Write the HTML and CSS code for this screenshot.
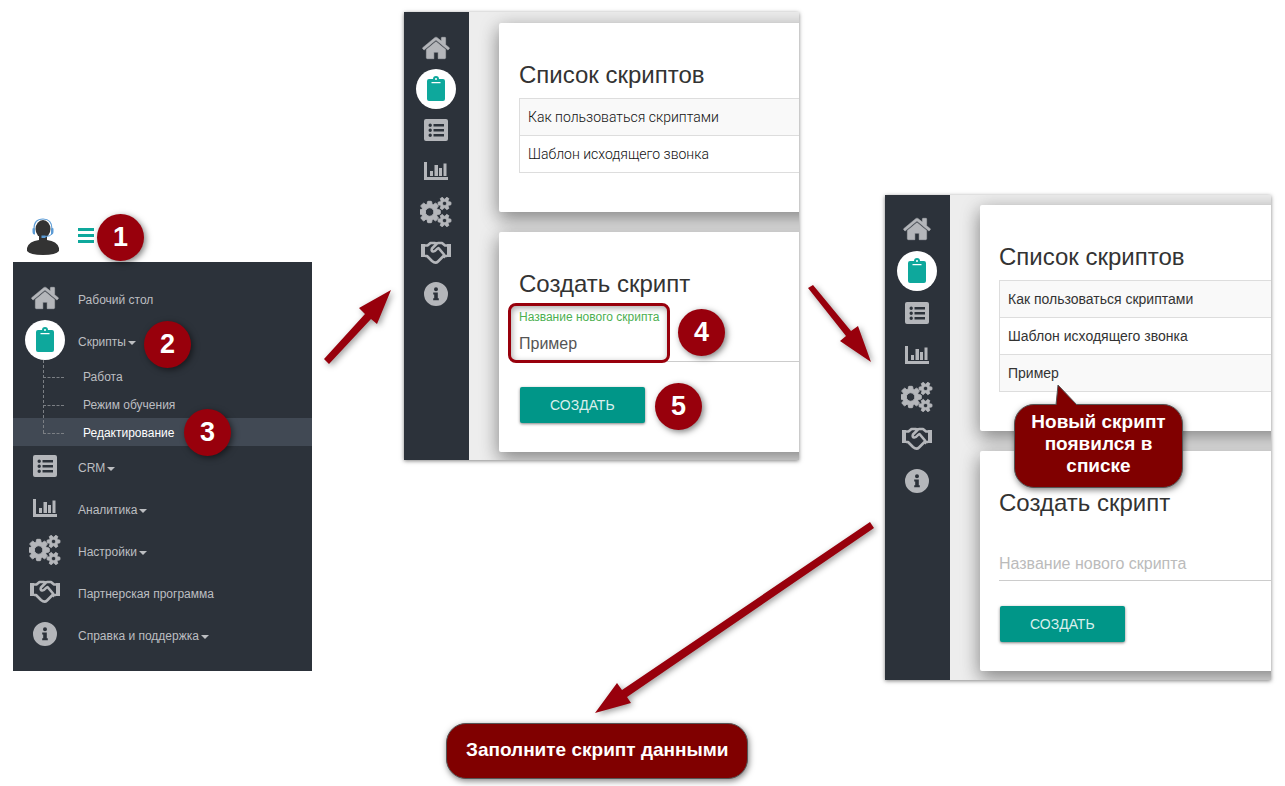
FILE: index.html
```html
<!DOCTYPE html>
<html lang="ru">
<head>
    <meta charset="UTF-8">
    <title>Создание скрипта</title>
    <link rel="stylesheet" href="styles.css">
</head>
<body>
    <!-- icon set -->
    <svg class="sprite" aria-hidden="true">
        <symbol id="home" viewBox="0 0 1792 1792">
            <path d="M1472 992v480q0 26-19 45t-45 19h-384v-384h-256v384h-384q-26 0-45-19t-19-45v-480q0-1 .5-3t.5-3l575-474 575 474q1 2 1 6zm223-69l-62 74q-8 9-21 11h-3q-13 0-21-7l-692-577-692 577q-12 8-24 7-13-2-21-11l-62-74q-8-10-7-23.5t11-21.5l719-599q32-26 76-26t76 26l244 204v-195q0-14 9-23t23-9h192q14 0 23 9t9 23v408l219 182q10 8 11 21.5t-7 23.5z" stroke="currentColor" stroke-width="30"/>
        </symbol>
        <symbol id="clipboard" viewBox="0 0 30 30">
            <path fill-rule="evenodd" d="M8 5h4a3 3 0 0 1 6 0h4a2 2 0 0 1 2 2v18a2 2 0 0 1-2 2H8a2 2 0 0 1-2-2V7a2 2 0 0 1 2-2zM14 5a1 1 0 1 0 2 0a1 1 0 1 0-2 0zM10.500 8v1.200h9v-1.200z"/>
        </symbol>
        <symbol id="list" viewBox="0 0 30 30">
            <path fill-rule="evenodd" d="M5 4h20a2 2 0 0 1 2 2v18a2 2 0 0 1-2 2H5a2 2 0 0 1-2-2V6a2 2 0 0 1 2-2zM12.500 9v2.500H23V9zM12.500 14v2.500H23V14zM12.500 19v2.500H23V19zM7.500 10.200a1.700 1.700 0 1 0 3.400 0a1.700 1.700 0 1 0-3.400 0zM7.500 15.200a1.700 1.700 0 1 0 3.400 0a1.700 1.700 0 1 0-3.400 0zM7.500 20.200a1.700 1.700 0 1 0 3.400 0a1.700 1.700 0 1 0-3.400 0z"/>
        </symbol>
        <symbol id="chart" viewBox="0 0 30 30">
            <path d="M3 6h3v15h21v3H3zM9 15h3v5H9zM13.500 9h3.500v11h-3.500zM18 12h3v8h-3zM22.500 7.500h3V20h-3z"/>
        </symbol>
        <symbol id="cogs" viewBox="0 0 1920 1792">
            <path stroke="currentColor" stroke-width="60" d="M832 896q0-106-75-181t-181-75-181 75-75 181 75 181 181 75 181-75 75-181zm768 512q0-52-38-90t-90-38-90 38-38 90q0 53 37.500 90.500t90.500 37.500 90.500-37.500 37.500-90.500zm0-1024q0-52-38-90t-90-38-90 38-38 90q0 53 37.500 90.500t90.500 37.500 90.500-37.500 37.500-90.500zm-384 421v185q0 10-7 19.500t-16 10.500l-155 24q-11 35-32 76 34 48 90 115 7 11 7 20 0 12-7 19-23 30-82.500 89.500t-78.500 59.500q-11 0-21-7l-115-90q-37 19-77 31-11 108-23 155-7 24-30 24h-186q-11 0-20-7.500t-10-17.500l-23-153q-34-10-75-31l-118 89q-7 7-20 7-11 0-21-8-144-133-144-160 0-9 7-19 10-14 41-53t47-61q-23-44-35-82l-152-24q-10-1-17-9.500t-7-19.500v-185q0-10 7-19.500t16-10.500l155-24q11-35 32-76-34-48-90-115-7-11-7-20 0-12 7-20 22-30 82-89t79-59q11 0 21 7l115 90q34-18 77-32 11-108 23-154 7-24 30-24h186q11 0 20 7.500t10 17.500l23 153q34 10 75 31l118-89q8-7 20-7 11 0 21 8 144 133 144 160 0 8-7 19-12 16-42 54t-45 60q23 48 34 82l152 23q10 2 17 10.500t7 19.500zm640 533v140q0 16-149 31-12 27-30 52 51 113 51 138 0 4-4 7-122 71-124 71-8 0-46-47t-52-68q-20 2-30 2t-30-2q-14 21-52 68t-46 47q-2 0-124-71-4-3-4-7 0-25 51-138-18-25-30-52-149-15-149-31v-140q0-16 149-31 13-29 30-52-51-113-51-138 0-4 4-7 4-2 35-20t59-34 30-16q8 0 46 46.500t52 67.500q20-2 30-2t30 2q51-71 92-112l6-2q4 0 124 70 4 3 4 7 0 25-51 138 17 23 30 52 149 15 149 31zm0-1024v140q0 16-149 31-12 27-30 52 51 113 51 138 0 4-4 7-122 71-124 71-8 0-46-47t-52-68q-20 2-30 2t-30-2q-14 21-52 68t-46 47q-2 0-124-71-4-3-4-7 0-25 51-138-18-25-30-52-149-15-149-31v-140q0-16 149-31 13-29 30-52-51-113-51-138 0-4 4-7 4-2 35-20t59-34 30-16q8 0 46 46.500t52 67.500q20-2 30-2t30 2q51-71 92-112l6-2q4 0 124 70 4 3 4 7 0 25-51 138 17 23 30 52 149 15 149 31z"/>
        </symbol>
        <symbol id="handshake" viewBox="0 0 32 30">
            <path d="M1 6h4v13H1zM27 6h4v13h-4z"/>
            <path fill="none" stroke="currentColor" stroke-width="2.600" stroke-linejoin="round" d="M5 7.500h2.500l3-2.500h4.500l1.500 1 1.500-1h4l3 2.500h2M5 18h2l5 5q3.500 3 6 .5l5.500-5.500H27M16.500 6l-4.500 4.500q-1 2.500 1 3 1.500.5 4-2.500l1.500-1 5.500 6.500q1 2-.5 3"/>
        </symbol>
        <symbol id="info" viewBox="0 0 30 30">
            <path fill-rule="evenodd" d="M3 15a12 12 0 1 0 24 0a12 12 0 1 0-24 0zM13 10.200a2 2 0 1 0 4 0a2 2 0 1 0-4 0zM12.200 13.500v2h1v3.800h-1v2h5.600v-2h-1v-5.800z"/>
        </symbol>
    </svg>

    <main class="steps">
        <!-- open the menu -->
        <section class="step step-menu">
            <header class="user">
                <svg class="avatar" viewBox="0 0 34 38">
                    <ellipse cx="17" cy="11" rx="7.500" ry="9" fill="#333"/>
                    <path d="M13 15h8v7q10 1 12 8v3q-3 4-16 4t-16-4v-3q2-7 12-8z" fill="#333"/>
                    <path d="M8 11q0-10 9-10t9 10" fill="none" stroke="#5b9bd5" stroke-width="1.200"/>
                    <path d="M6.500 10.500q1.500-1 2.500 0v6q-2.500.5-2.500-3zM25 10.500q1.500-1 2.500 0v3q0 3.500-2.500 3zM15.500 17.500h4v2.500h-4z" fill="#5b9bd5"/>
                    <path d="M26 16q-2 2.500-7 2.500" fill="none" stroke="#5b9bd5"/>
                </svg>
                <button class="burger" type="button" aria-label="Меню"><span></span><span></span><span></span></button>
                <b class="badge badge-1">1</b>
            </header>
            <nav class="menu">
                <a class="item" href="#"><span class="icon"><svg><use href="#home"/></svg></span>Рабочий стол</a>
                <a class="item active" href="#"><span class="icon"><svg><use href="#clipboard"/></svg></span>Скрипты<i class="caret"></i></a>
                <div class="submenu">
                    <a href="#">Работа</a>
                    <a href="#">Режим обучения</a>
                    <a class="selected" href="#">Редактирование</a>
                </div>
                <a class="item" href="#"><span class="icon"><svg><use href="#list"/></svg></span>CRM<i class="caret"></i></a>
                <a class="item" href="#"><span class="icon"><svg><use href="#chart"/></svg></span>Аналитика<i class="caret"></i></a>
                <a class="item" href="#"><span class="icon"><svg><use href="#cogs"/></svg></span>Настройки<i class="caret"></i></a>
                <a class="item" href="#"><span class="icon"><svg><use href="#handshake"/></svg></span>Партнерская программа</a>
                <a class="item" href="#"><span class="icon"><svg><use href="#info"/></svg></span>Справка и поддержка<i class="caret"></i></a>
                <b class="badge badge-2">2</b>
                <b class="badge badge-3">3</b>
            </nav>
            <svg class="arrow arrow-1" viewBox="0 0 68 75"><path d="M67 0L53 34 47 29 5 74 0 69 41 24 35 18z"/></svg>
        </section>

        <!-- fill the form -->
        <section class="step step-create">
            <div class="window compact">
                <nav class="sidebar">
                    <a href="#" aria-label="Рабочий стол"><svg><use href="#home"/></svg></a>
                    <a class="active" href="#" aria-label="Скрипты"><svg><use href="#clipboard"/></svg></a>
                    <a href="#" aria-label="CRM"><svg><use href="#list"/></svg></a>
                    <a href="#" aria-label="Аналитика"><svg><use href="#chart"/></svg></a>
                    <a href="#" aria-label="Настройки"><svg><use href="#cogs"/></svg></a>
                    <a href="#" aria-label="Партнерская программа"><svg><use href="#handshake"/></svg></a>
                    <a href="#" aria-label="Справка и поддержка"><svg><use href="#info"/></svg></a>
                </nav>
                <div class="content">
                    <div class="card card-list">
                        <h2>Список скриптов</h2>
                        <table>
                            <tr><td>Как пользоваться скриптами</td></tr>
                            <tr><td>Шаблон исходящего звонка</td></tr>
                        </table>
                    </div>
                    <form class="card card-form">
                        <h2>Создать скрипт</h2>
                        <div class="field filled">
                            <label for="name1">Название нового скрипта</label>
                            <input id="name1" type="text" value="Пример">
                            <div class="frame"></div>
                            <b class="badge badge-4">4</b>
                        </div>
                        <button class="btn" type="button">СОЗДАТЬ</button>
                        <b class="badge badge-5">5</b>
                    </form>
                </div>
            </div>
            <svg class="arrow arrow-2" viewBox="0 0 64 78"><path d="M5 0L43 46 50 41 63 77 32 56 38 51 0 3z"/></svg>
        </section>

        <!-- result -->
        <section class="step step-result">
            <div class="window">
                <nav class="sidebar">
                    <a href="#" aria-label="Рабочий стол"><svg><use href="#home"/></svg></a>
                    <a class="active" href="#" aria-label="Скрипты"><svg><use href="#clipboard"/></svg></a>
                    <a href="#" aria-label="CRM"><svg><use href="#list"/></svg></a>
                    <a href="#" aria-label="Аналитика"><svg><use href="#chart"/></svg></a>
                    <a href="#" aria-label="Настройки"><svg><use href="#cogs"/></svg></a>
                    <a href="#" aria-label="Партнерская программа"><svg><use href="#handshake"/></svg></a>
                    <a href="#" aria-label="Справка и поддержка"><svg><use href="#info"/></svg></a>
                </nav>
                <div class="content">
                    <div class="card card-list">
                        <h2>Список скриптов</h2>
                        <table>
                            <tr><td>Как пользоваться скриптами</td></tr>
                            <tr><td>Шаблон исходящего звонка</td></tr>
                            <tr><td>Пример</td></tr>
                        </table>
                    </div>
                    <form class="card card-form">
                        <h2>Создать скрипт</h2>
                        <div class="field">
                            <label for="name2">Название нового скрипта</label>
                            <input id="name2" type="text">
                        </div>
                        <button class="btn" type="button">СОЗДАТЬ</button>
                    </form>
                </div>
            </div>
            <div class="callout callout-new">
                <svg class="tail" viewBox="0 0 24 22"><path d="M1 21L3 1 22 21" fill="#800000" stroke="#555"/></svg>
                Новый скрипт появился в списке
            </div>
            <svg class="arrow arrow-3" viewBox="0 0 279 192"><path d="M275 0L279 6 32 175 36 181 0 191 22 161 27 168z"/></svg>
        </section>
    </main>

    <p class="callout callout-final">Заполните скрипт данными</p>
</body>
</html>
```

FILE: styles.css
```css
* {
    box-sizing: border-box;
}
body {
    margin: 0;
    padding-bottom: 7px;
    background: #fff;
    font-family: "Liberation Sans", Arial, sans-serif;
}
a {
    color: inherit;
    text-decoration: none;
}
.sprite {
    position: absolute;
    width: 0;
    height: 0;
}

/* three steps in a row */
.steps {
    display: flex;
    align-items: flex-start;
    padding: 0 14px 0 13px;
}
.step {
    position: relative;
    min-width: 0;
}
.step-menu {
    flex: 299 1 0;
    margin-top: 216px;
}
.step-create {
    flex: 395 1 0;
    margin: 12px 0 0 92px;
}
.step-result {
    flex: 386 1 0;
    margin: 195px 0 0 86px;
}

/* header with avatar */
.user {
    position: relative;
    display: flex;
    align-items: flex-start;
    height: 46px;
    padding: 2px 13px;
}
.avatar {
    width: 34px;
    height: 38px;
}
.burger {
    display: flex;
    flex-direction: column;
    gap: 3px;
    width: 16px;
    margin: 10px 0 0 18px;
    padding: 0;
    border: 0;
    background: none;
}
.burger span {
    height: 3px;
    width: 100%;
    background: #0ea89c;
}

/* full menu */
.menu {
    position: relative;
    padding: 16px 0 15px;
    background: #2c323a;
    color: #bcbec1;
    font-size: 12px;
}
.item {
    display: flex;
    align-items: center;
    height: 42px;
    padding: 2px 0 0 12px;
}
.icon {
    display: flex;
    justify-content: center;
    align-items: center;
    width: 40px;
    height: 40px;
    margin: 0 13px 4px 0;
}
.icon svg,
.sidebar svg {
    width: 32px;
    height: 30px;
    fill: currentColor;
    color: #b4b6ba;
}
.active .icon,
.sidebar .active {
    border-radius: 50%;
    background: #fff;
}
.active .icon svg,
.sidebar .active svg {
    color: #0ea89c;
}
.caret {
    margin: 2px 0 0 2px;
    border: 4px solid transparent;
    border-top-color: currentColor;
    border-bottom: 0;
}
.submenu {
    position: relative;
}
.submenu:before {
    content: "";
    position: absolute;
    left: 30px;
    top: -2px;
    bottom: 13px;
    border-left: 1px dashed #7b7f84;
}
.submenu a {
    display: flex;
    align-items: center;
    height: 28px;
    padding: 2px 0 0 30px;
}
.submenu a:before {
    content: "";
    width: 21px;
    margin-right: 19px;
    border-top: 1px dashed #7b7f84;
}
.submenu .selected {
    background: #414954;
    color: #fff;
}

/* cropped application window */
.window {
    display: flex;
    overflow: hidden;
    background: #ededed;
    box-shadow: 0 1px 4px rgba(0, 0, 0, .5);
}
.sidebar {
    display: flex;
    flex-direction: column;
    align-items: center;
    flex: none;
    width: 65px;
    padding: 14px 1px 0 0;
    background: #2c323a;
}
.sidebar a {
    display: flex;
    justify-content: center;
    align-items: center;
    width: 40px;
    height: 40px;
    margin-bottom: 2px;
}
.content {
    flex: 1;
    display: flex;
    flex-direction: column;
    gap: 20px;
    min-width: 0;
    padding: 10px 0 9px 30px;
}
.compact .sidebar {
    padding-top: 16px;
}
.compact .sidebar a {
    margin-bottom: 1px;
}
.compact .content {
    padding: 11px 0 8px 30px;
}
.card {
    position: relative;
    margin-right: -40px;
    padding: 36px 19px 0;
    border-radius: 2px;
    background: #fff;
    box-shadow: 0 8px 17px rgba(0, 0, 0, .25), 0 4px 20px rgba(0, 0, 0, .25);
}
.card-list {
    padding-bottom: 39px;
}
.card-form {
    padding-bottom: 29px;
}
.compact .card {
    padding-left: 20px;
}
h2 {
    margin: 0 0 7px;
    font-size: 24px;
    font-weight: normal;
    line-height: 32px;
    color: #333;
}
table {
    width: 100%;
    border-collapse: collapse;
    font-size: 14px;
    color: #333;
}
.compact table {
    font-family: Roboto, sans-serif;
    font-weight: 300;
    color: #111;
}
td {
    height: 37px;
    padding: 0 8px;
    border: 1px solid #ddd;
}
tr:nth-child(odd) {
    background: #f9f9f9;
}

/* material text field */
.field {
    position: relative;
    padding-top: 20px;
}
.field label {
    position: absolute;
    top: 28px;
    left: 0;
    line-height: 20px;
    font-size: 16px;
    color: #bbb;
}
.field.filled label {
    top: 0;
    font-size: 12px;
    color: #4caf50;
}
.field input {
    display: block;
    width: 100%;
    height: 35px;
    padding: 0;
    border: 0;
    border-bottom: 1px solid #ccc;
    background: none;
    font: 16px "Liberation Sans", Arial, sans-serif;
    color: #555;
}
.btn {
    display: block;
    height: 36px;
    margin: 25px 0 0 1px;
    padding: 0 30px;
    border: 0;
    border-radius: 2px;
    background: #009688;
    box-shadow: 0 1px 3px rgba(0, 0, 0, .5);
    font: 14px "Liberation Sans", Arial, sans-serif;
    color: #d9efed;
}

/* annotations */
.badge {
    position: absolute;
    z-index: 1;
    width: 47px;
    height: 47px;
    border-radius: 50%;
    background: #98000c;
    box-shadow: 2px 2px 6px rgba(0, 0, 0, .5);
    font-size: 27px;
    line-height: 47px;
    text-align: center;
    color: #fff;
}
.badge-1 {
    left: 84px;
    top: -2px;
}
.badge-2 {
    left: 131px;
    top: 59px;
}
.badge-3 {
    left: 171px;
    top: 147px;
}
.badge-4 {
    left: 159px;
    top: 2px;
}
.badge-5 {
    left: 156px;
    top: 151px;
}
.frame {
    position: absolute;
    left: -11px;
    top: -4px;
    width: 162px;
    height: 60px;
    border: 3px solid #98000c;
    border-radius: 8px;
    box-shadow: inset 1px 2px 6px rgba(0, 0, 0, .35);
    pointer-events: none;
}
.arrow {
    position: absolute;
    z-index: 2;
    overflow: visible;
    fill: #98000c;
    filter: drop-shadow(2px 2px 3px rgba(0, 0, 0, .4));
}
.arrow-1 {
    left: calc(100% + 12px);
    top: 74px;
    width: 68px;
    height: 75px;
}
.arrow-2 {
    left: calc(100% + 9px);
    top: 273px;
    width: 64px;
    height: 78px;
}
.arrow-3 {
    left: -290px;
    top: 327px;
    width: 279px;
    height: 192px;
}
.callout {
    border: 1px solid #555;
    border-radius: 20px;
    background: #800000;
    box-shadow: 1px 2px 6px rgba(0, 0, 0, .5);
    font-size: 19px;
    font-weight: bold;
    line-height: 22px;
    text-align: center;
    color: #fff;
}
.callout-new {
    position: absolute;
    left: 129px;
    top: 209px;
    width: 169px;
    padding: 6px 12px 10px;
}
.tail {
    position: absolute;
    left: 40px;
    top: -21px;
    width: 24px;
    height: 22px;
}
.callout-final {
    width: fit-content;
    margin: 43px 0 0 446px;
    padding: 15px 19px 17px;
}
```
